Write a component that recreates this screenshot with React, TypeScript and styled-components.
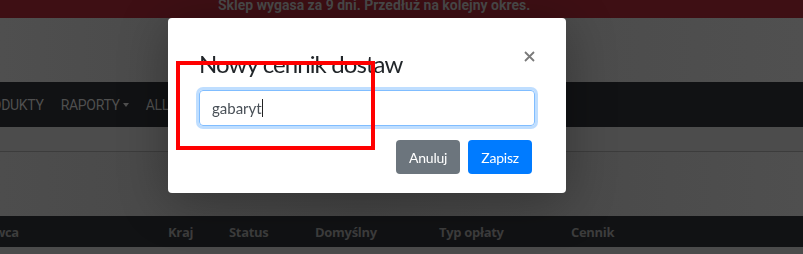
import React from 'react';
import styled, { createGlobalStyle } from 'styled-components';

const GlobalStyle = createGlobalStyle`
  html, body {
    margin: 0;
    padding: 0;
    background: #4b4b4b;
    overflow: hidden;
  }
  body {
    font-family: 'Open Sans', 'Noto Sans', sans-serif;
  }
`;

const Page = styled.div`
  width: 803px;
  height: 254px;
  overflow: hidden;
  display: flex;
  flex-direction: column;
  background: #4b4b4b;
`;

const Banner = styled.div`
  height: 18px;
  flex: none;
  background: #3e0f14;
  color: #4a4a4a;
  font-family: Roboto, 'Noto Sans', sans-serif;
  font-weight: 700;
  font-size: 14px;
  line-height: 11px;
  padding-left: 218px;
  overflow: hidden;
  white-space: nowrap;
`;

const Header = styled.div`
  height: 64px;
  flex: none;
  background: linear-gradient(90deg, #4f4f4f 0%, #474747 40%, #505050 100%);
`;

const Nav = styled.nav`
  height: 45px;
  flex: none;
  background: #111214;
  display: flex;
  align-items: center;
  gap: 17px;
  padding-top: 1px;
  box-sizing: border-box;
  overflow: hidden;
  white-space: nowrap;
`;

const NavItem = styled.span<{ $shift?: number }>`
  color: #4f4f4f;
  font-family: Roboto, 'Noto Sans', sans-serif;
  font-size: 14px;
  letter-spacing: -0.3px;
  margin-left: ${(p) => p.$shift ?? 0}px;
  display: inline-flex;
  align-items: center;
  gap: 3px;
`;

const Caret = styled.span`
  display: inline-block;
  width: 0;
  height: 0;
  border-left: 3.5px solid transparent;
  border-right: 3.5px solid transparent;
  border-top: 4px solid #4f4f4f;
`;

const SubBar = styled.div`
  height: 24px;
  flex: none;
  border-bottom: 1px solid #3c3c3c;
  background: #4c4c4c;
`;

const Content = styled.div`
  height: 64px;
  flex: none;
  background: linear-gradient(90deg, #4d4d4d 0%, #454545 45%, #4f4f4f 100%);
`;

const TableHead = styled.div`
  height: 31px;
  flex: none;
  background: #111214;
  display: grid;
  grid-template-columns: 168px 61px 86px 124px 132px 1fr;
  align-items: center;
  overflow: hidden;
  white-space: nowrap;
`;

const Th = styled.span<{ $shift?: number }>`
  color: #3d3d3d;
  font-family: 'Open Sans', 'Noto Sans', sans-serif;
  font-weight: 700;
  font-size: 13px;
  letter-spacing: -0.3px;
  margin-left: ${(p) => p.$shift ?? 0}px;
`;

const Rest = styled.div`
  flex: 1;
  background: #4b4b4b;
`;

const Dialog = styled.div`
  position: fixed;
  left: 168px;
  top: 18px;
  width: 398px;
  height: 175px;
  box-sizing: border-box;
  background: #fff;
  border-radius: 4px;
  padding: 32px 31px 0 31px;
  font-family: Lato, 'Noto Sans', sans-serif;
  box-shadow: 0 8px 50px rgba(0, 0, 0, 0.3);
`;

const DialogHeader = styled.div`
  display: flex;
  justify-content: space-between;
  align-items: flex-start;
  height: 40px;
`;

const Title = styled.h5`
  margin: 0;
  font-size: 24px;
  font-weight: 400;
  line-height: 28px;
  color: #212529;
  letter-spacing: -0.9px;
`;

const Close = styled.button`
  border: 0;
  background: none;
  padding: 0;
  width: 12px;
  height: 12px;
  display: flex;
  align-items: center;
  justify-content: center;
`;

const Field = styled.div`
  height: 36px;
  box-sizing: border-box;
  border: 1px solid #80bdff;
  border-radius: 4px;
  box-shadow: 0 0 0 3px rgba(0, 123, 255, 0.25);
  display: flex;
  align-items: center;
  padding: 0 12px;
  font-size: 15px;
  color: #495057;
`;

const TextCaret = styled.span`
  display: inline-block;
  width: 1px;
  height: 18px;
  background: #222;
`;

const Footer = styled.div`
  display: flex;
  justify-content: flex-end;
  gap: 8px;
  padding-right: 3px;
  margin-top: 14px;
`;

const Button = styled.button<{ $variant: 'secondary' | 'primary' }>`
  height: 34px;
  border: 0;
  border-radius: 4px;
  padding: 0 13px;
  font-family: Lato, 'Noto Sans', sans-serif;
  font-size: 14px;
  letter-spacing: -0.2px;
  color: #fff;
  background: ${(p) => (p.$variant === 'primary' ? '#007bff' : '#6c757d')};
`;

const Highlight = styled.div`
  position: fixed;
  left: 176px;
  top: 61px;
  width: 199px;
  height: 89px;
  box-sizing: border-box;
  border: 4px solid #ff0000;
  pointer-events: none;
`;

export default function App() {
  return (
    <>
      <GlobalStyle />
      <Page>
        <Banner>Sklep wygasa za 9 dni. Przedłuż na kolejny okres.</Banner>
        <Header />
        <Nav>
          <NavItem $shift={-25}>PRODUKTY</NavItem>
          <NavItem>
            RAPORTY
            <Caret />
          </NavItem>
          <NavItem>ALLEGRO</NavItem>
        </Nav>
        <SubBar />
        <Content />
        <TableHead>
          <Th $shift={-42}>Dostawca</Th>
          <Th>Kraj</Th>
          <Th>Status</Th>
          <Th>Domyślny</Th>
          <Th>Typ opłaty</Th>
          <Th>Cennik</Th>
        </TableHead>
        <Rest />
      </Page>
      <Dialog>
        <DialogHeader>
          <Title>Nowy cennik dostaw</Title>
          <Close aria-label="Zamknij">
            <svg width="11" height="11" viewBox="0 0 11 11">
              <path d="M1 1 L10 10 M10 1 L1 10" stroke="#7a7a7a" strokeWidth="1.8" />
            </svg>
          </Close>
        </DialogHeader>
        <Field>
          gabaryt
          <TextCaret />
        </Field>
        <Footer>
          <Button $variant="secondary">Anuluj</Button>
          <Button $variant="primary">Zapisz</Button>
        </Footer>
      </Dialog>
      <Highlight />
    </>
  );
}
